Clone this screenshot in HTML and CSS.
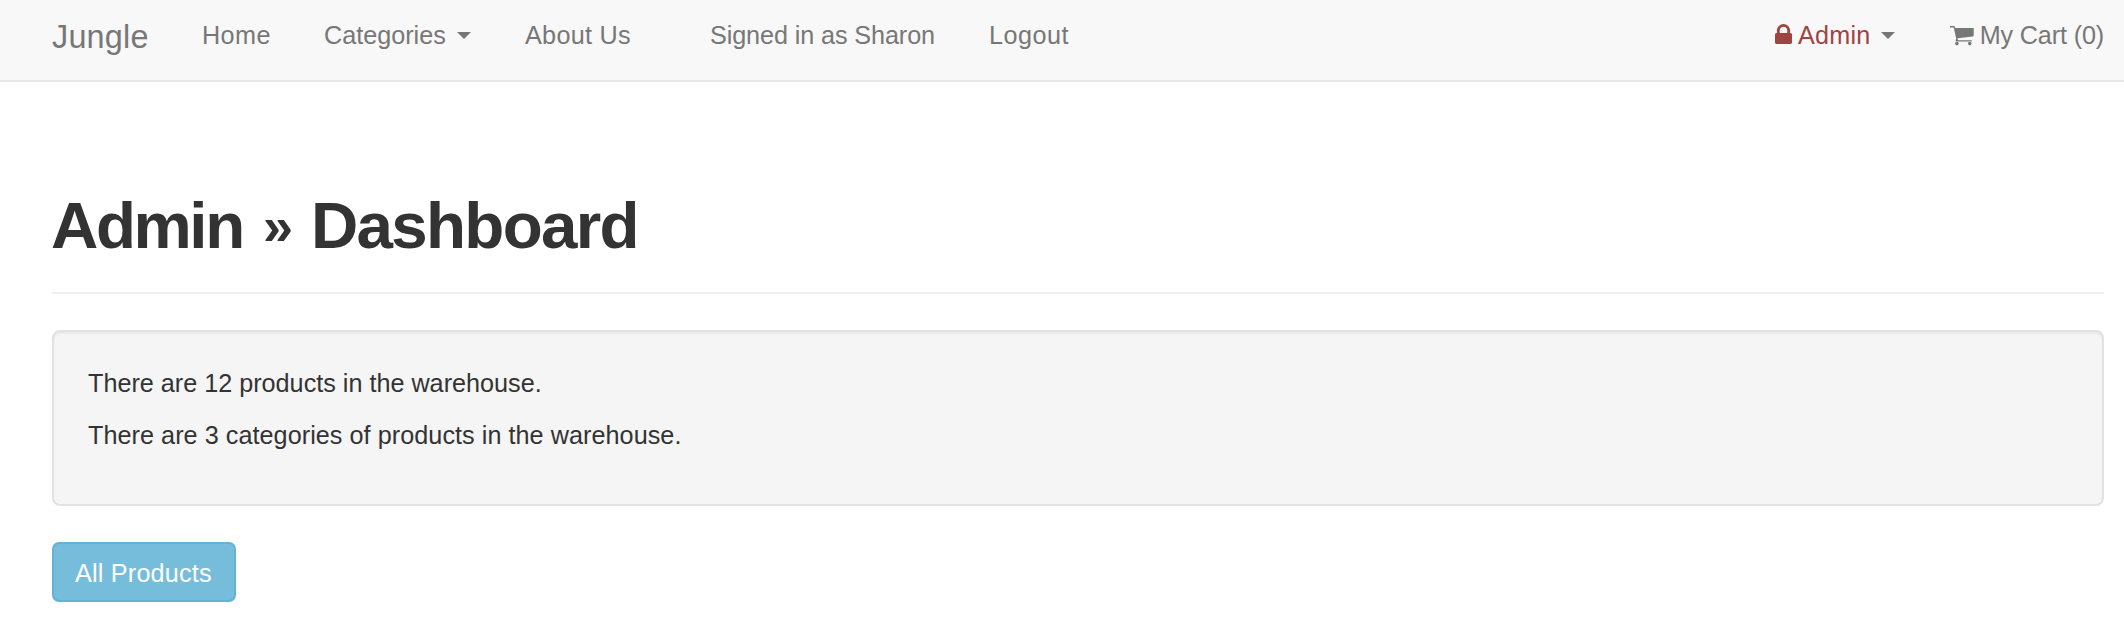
FILE: index.html
```html
<!DOCTYPE html>
<html lang="en">
<head>
<meta charset="utf-8">
<title>Jungle</title>
<link rel="stylesheet" href="styles.css">
</head>
<body>
<nav class="navbar">
  <a class="brand">Jungle</a>
  <a class="link home">Home</a>
  <a class="link categories">Categories<i class="caret"></i></a>
  <a class="link about">About Us</a>
  <span class="link signed">Signed in as Sharon</span>
  <a class="link logout">Logout</a>
  <div class="right">
    <a class="link admin">
      <svg class="lock" viewBox="0 0 1152 1408" preserveAspectRatio="none"><path fill="currentColor" d="M320 640h512V448q0-106-75-181t-181-75-181 75-75 181zm832 96v576q0 40-28 68t-68 28H96q-40 0-68-28t-28-68V736q0-40 28-68t68-28h32V448q0-184 132-316T576 0t316 132 132 316v192h32q40 0 68 28t28 68z"/></svg>
      <span>Admin</span><i class="caret"></i>
    </a>
    <a class="link cart">
      <svg class="trolley" viewBox="0 0 24 20"><path fill="currentColor" d="M0 0h4.500l.8 1.800H24v7.500q0 1-1 1.200L7.700 12.300l.4 2H22v1.200H6.500q-1 0-.8-1l.6-1.800L3.800 1.500H0z"/><circle cx="7" cy="17.700" r="1.800" fill="currentColor"/><circle cx="20" cy="17.700" r="1.800" fill="currentColor"/></svg>
      <span>My Cart (0)</span>
    </a>
  </div>
</nav>
<main class="container">
  <h1 class="title"><span class="word-admin">Admin</span><span class="chevrons">»</span><span class="word-dash">Dashboard</span></h1>
  <section class="well">
    <p>There are 12 products in the warehouse.</p>
    <p class="categories-count">There are 3 categories of products in the warehouse.</p>
  </section>
  <a class="btn">All Products</a>
</main>
</body>
</html>
```
FILE: styles.css
```css
* { box-sizing: border-box; }
body {
  margin: 0;
  background: #fff;
  color: #333;
  font: 25.2px/36px "Liberation Sans", Arial, sans-serif;
}
.navbar {
  display: flex;
  height: 82px;
  padding: 17px 20px 0 52px;
  background: #f8f8f8;
  border-bottom: 2px solid #e7e7e7;
  color: #777;
  white-space: nowrap;
}
.brand { width: 150px; font-size: 32.4px; line-height: 40px; letter-spacing: .2px; }
.link { display: block; }
.home { width: 122px; letter-spacing: .4px; }
.categories { width: 201px; }
.about { width: 185px; letter-spacing: .3px; }
.signed { width: 279px; letter-spacing: -.1px; }
.logout { letter-spacing: .5px; }
.caret {
  display: inline-block;
  margin-left: 11px;
  border: 7px solid transparent;
  border-top: 7px solid #777;
  border-bottom: 0;
  vertical-align: 5px;
}
.right { display: flex; margin-left: auto; }
.admin, .cart { display: flex; align-items: flex-start; }
.admin { width: 175px; color: #a04442; letter-spacing: .2px; }
.lock { width: 17px; height: 20px; margin: 7px 6px 0 0; }
.admin .caret { margin: 15px 0 0 11px; }
.cart { width: 154px; letter-spacing: -.15px; }
.trolley { width: 24px; height: 20px; margin: 9px 6px 0 0; }
.container { padding: 0 20px 0 52px; }
.title {
  display: flex;
  height: 212px;
  margin: 0;
  padding-top: 108px;
  border-bottom: 2px solid #eee;
  font-size: 65.5px;
  line-height: 72px;
  white-space: nowrap;
}
.word-admin { width: 212px; margin-left: -1px; letter-spacing: -2.4px; }
.chevrons { width: 48px; font-size: 54px; }
.word-dash { letter-spacing: -1.7px; }
.well {
  height: 176px;
  margin: 36px 0;
  padding: 33px 34px;
  border: 2px solid #e2e2e2;
  border-radius: 8px;
  background: #f5f5f5;
  box-shadow: inset 0 2px 2px rgba(0, 0, 0, .05);
}
.well p { margin: 0 0 16px; }
.well .categories-count { letter-spacing: .05px; }
.btn {
  display: block;
  width: 184px;
  height: 60px;
  padding: 11px 0 0 21px;
  border: 2px solid #62b4d6;
  border-radius: 7px;
  background: #76bddc;
  color: #fff;
  letter-spacing: .2px;
  white-space: nowrap;
}
```
